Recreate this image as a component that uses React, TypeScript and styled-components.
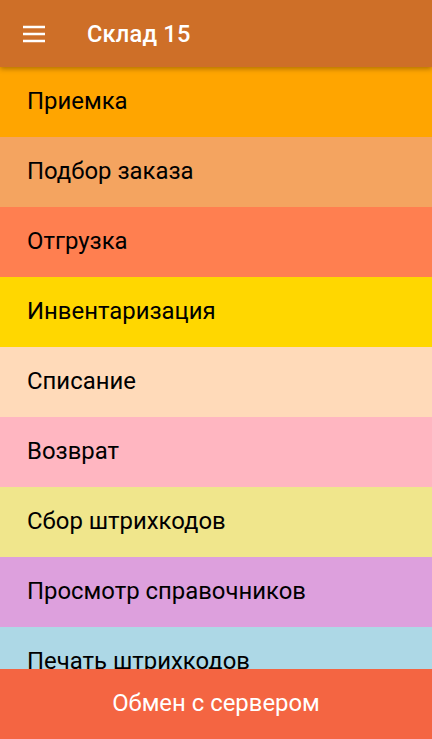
import styled, { createGlobalStyle } from 'styled-components';

const GlobalStyle = createGlobalStyle`
  html, body {
    margin: 0;
    padding: 0;
    background: #ffffff;
    font-family: Roboto, "Noto Sans", sans-serif;
  }
`

const Screen = styled.div`
  width: 432px;
  height: 739px;
  display: flex;
  flex-direction: column;
  overflow: hidden;
`

const TopBar = styled.header`
  height: 67px;
  flex-shrink: 0;
  display: flex;
  align-items: center;
  background: #ce6f28;
  box-shadow: 0 2px 5px rgba(0, 0, 0, 0.3);
  position: relative;
  z-index: 2;
`

const MenuButton = styled.button`
  width: 68px;
  height: 67px;
  display: flex;
  align-items: center;
  justify-content: center;
  background: none;
  border: none;
  padding: 0;
  margin-right: 19px;
`

const Title = styled.h1`
  margin: 0;
  color: #ffffff;
  font-size: 23.6px;
  font-weight: 500;
  letter-spacing: 0.2px;
`

const List = styled.ul`
  list-style: none;
  margin: 0;
  padding: 0;
  flex: 1;
  overflow: hidden;
`

const Row = styled.li<{ $bg: string }>`
  height: 70px;
  display: flex;
  align-items: center;
  padding-left: 27px;
  padding-bottom: 2px;
  box-sizing: border-box;
  background: ${({ $bg }) => $bg};
  color: #000000;
  font-size: 23.9px;
`

const ExchangeButton = styled.button`
  height: 70px;
  flex-shrink: 0;
  border: none;
  background: #f46542;
  color: #ffffff;
  font-family: Roboto, "Noto Sans", sans-serif;
  font-size: 23.9px;
  width: 100%;
  padding: 0 0 2px;
`

const items = [
  { label: 'Приемка', color: '#ffa500' },
  { label: 'Подбор заказа', color: '#f4a460' },
  { label: 'Отгрузка', color: '#ff7f50' },
  { label: 'Инвентаризация', color: '#ffd700' },
  { label: 'Списание', color: '#ffdab9' },
  { label: 'Возврат', color: '#ffb6c1' },
  { label: 'Сбор штрихкодов', color: '#f0e68c' },
  { label: 'Просмотр справочников', color: '#dda0dd' },
  { label: 'Печать штрихкодов', color: '#add8e6' },
]

export default function App() {
  return (
    <Screen>
      <GlobalStyle />
      <TopBar>
        <MenuButton aria-label="Меню">
          <svg width="24" height="24" viewBox="0 0 24 24">
            <path d="M1 5h22M1 12h22M1 19h22" stroke="#fff" strokeWidth="2.4" />
          </svg>
        </MenuButton>
        <Title>Склад 15</Title>
      </TopBar>
      <List>
        {items.map((it) => (
          <Row key={it.label} $bg={it.color}>{it.label}</Row>
        ))}
      </List>
      <ExchangeButton>Обмен с сервером</ExchangeButton>
    </Screen>
  )
}
